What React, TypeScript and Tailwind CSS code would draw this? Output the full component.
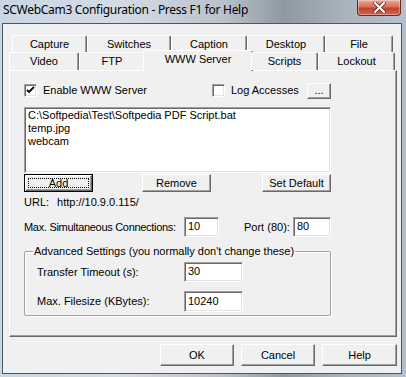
import React from "react";

const raised =
  "border border-t-white border-l-white border-r-[#696969] border-b-[#696969] shadow-[inset_-1px_-1px_0_#a0a0a0] bg-[#f0f0f0]";
const sunken =
  "border border-t-[#a0a0a0] border-l-[#a0a0a0] border-r-white border-b-white shadow-[inset_1px_1px_0_#696969,inset_-1px_-1px_0_#e3e3e3] bg-white";

function Btn({ label, w, h = 18, def = false, className = "" }: { label: string; w: number; h?: number; def?: boolean; className?: string }) {
  if (def) {
    return (
      <div className={`border border-black ${className}`} style={{ width: w, height: h }}>
        <div className={`${raised} w-full h-full flex items-center justify-center p-[2px]`}>
          <div className="w-full h-full border border-dotted border-black flex items-center justify-center leading-none">
            {label}
          </div>
        </div>
      </div>
    );
  }
  return (
    <div className={`${raised} flex items-center justify-center leading-none whitespace-nowrap ${className}`} style={{ width: w, height: h }}>
      {label}
    </div>
  );
}

function Check({ checked }: { checked: boolean }) {
  return (
    <div className={`${sunken} w-[13px] h-[13px] shrink-0 flex items-center justify-center`}>
      {checked && (
        <svg width="9" height="9" viewBox="0 0 9 9">
          <path d="M1 4 L3 6 L8 1" stroke="#000" strokeWidth="1.8" fill="none" />
        </svg>
      )}
    </div>
  );
}

function Tab({ label, w, h }: { label: string; w: number; h: number }) {
  return (
    <div
      className="border-t border-l border-t-white border-l-white border-r border-r-[#696969] shadow-[inset_-1px_0_0_#a0a0a0] rounded-tl-[2px] rounded-tr-[2px] bg-[#f0f0f0] flex items-start justify-center pt-[2px] leading-[13px] whitespace-nowrap"
      style={{ width: w, height: h }}
    >
      {label}
    </div>
  );
}

export default function App() {
  return (
    <div className="w-[406px] h-[377px] overflow-hidden flex flex-col bg-[linear-gradient(90deg,#c9d6e3_0%,#d3dce6_30%,#b9c2cb_55%,#8f99a3_70%,#a9b3bd_85%,#b4c0cc_100%)] font-['Liberation_Sans',Arial,sans-serif] text-[11px] text-black">
      {/* title bar */}
      <div className="h-[23px] flex items-start justify-between shrink-0">
        <div className="pl-[3px] pt-[2px] text-[12px] leading-[16px] text-black font-['Noto_Sans',sans-serif] tracking-[-0.3px]">
          SCWebCam3 Configuration - Press F1 for Help
        </div>
        <div className="mr-[5px] w-[44px] h-[16px] rounded-b-[4px] border border-t-0 border-[#6b2a20] bg-[linear-gradient(180deg,#e8a898_0%,#d9705c_45%,#c2412c_55%,#d0664f_100%)] shadow-[inset_0_0_0_1px_rgba(255,255,255,0.35)] flex items-center justify-center">
          <svg width="13" height="11" viewBox="0 0 13 11">
            <path d="M2 1 L11 10 M11 1 L2 10" stroke="#5a2a22" strokeWidth="3.6" strokeLinecap="square" />
            <path d="M2 1 L11 10 M11 1 L2 10" stroke="#fff" strokeWidth="2" strokeLinecap="square" />
          </svg>
        </div>
      </div>
      {/* client */}
      <div className="ml-[2px] mr-[4px] h-[351px] border border-[#4e5761] bg-[#f0f0f0] flex flex-col">
        <div className="pl-[6px] pt-[11px] flex flex-col">
          {/* tabs row 1 */}
          <div className="flex pl-[3px] h-[17px]">
            <Tab label="Capture" w={75} h={17} />
            <Tab label="Switches" w={84} h={17} />
            <Tab label="Caption" w={76} h={17} />
            <Tab label="Desktop" w={78} h={17} />
            <Tab label="File" w={68} h={17} />
          </div>
          {/* tabs row 2 */}
          <div className="flex h-[18px] items-end relative z-10">
            <Tab label="Video" w={70} h={18} />
            <Tab label="FTP" w={66} h={18} />
            <div
              className="border-t border-l border-t-white border-l-white border-r border-r-[#696969] shadow-[inset_-1px_0_0_#a0a0a0] rounded-t-[2px] bg-[#f0f0f0] flex items-start justify-center pt-[2px] leading-[13px] -mx-[2px] h-[21px] -mb-[1px]"
              style={{ width: 110 }}
            >
              WWW Server
            </div>
            <Tab label="Scripts" w={67} h={18} />
            <Tab label="Lockout" w={77} h={18} />
          </div>
          {/* page */}
          <div className="w-[388px] h-[267px] border border-t-white border-l-white border-r-[#696969] border-b-[#696969] shadow-[inset_-1px_-1px_0_#a0a0a0] flex flex-col pl-[14px]">
            {/* row A */}
            <div className="mt-[11px] h-[17px] w-[307px] flex items-center">
              <Check checked />
              <span className="ml-[6px] whitespace-nowrap">Enable WWW Server</span>
              <div className="ml-[65px] flex items-center">
                <Check checked={false} />
                <span className="ml-[6px] whitespace-nowrap">Log Accesses</span>
              </div>
              <Btn label="..." w={24} h={16} className="ml-auto" />
            </div>
            {/* listbox */}
            <div className={`${sunken} mt-[8px] w-[307px] h-[66px] pl-[3px] pt-[1px] leading-[13px]`}>
              <div>C:\Softpedia\Test\Softpedia PDF Script.bat</div>
              <div>temp.jpg</div>
              <div>webcam</div>
            </div>
            {/* buttons */}
            <div className="mt-[1px] w-[307px] flex">
              <Btn label="Add" w={69} def />
              <Btn label="Remove" w={69} className="ml-[49px]" />
              <Btn label="Set Default" w={69} className="ml-auto" />
            </div>
            <div className="mt-[3px] h-[14px] leading-[14px] flex">
              <span>URL:</span>
              <span className="ml-[8px]">http://10.9.0.115/</span>
            </div>
            <div className="mt-[8px] w-[307px] h-[20px] flex items-center">
              <span className="w-[160px] shrink-0 whitespace-nowrap tracking-[-0.3px]">Max. Simultaneous Connections:</span>
              <div className={`${sunken} w-[35px] shrink-0 h-[20px] pl-[3px] leading-[17px]`}>10</div>
              <span className="ml-[25px] whitespace-nowrap">Port (80):</span>
              <div className={`${sunken} w-[38px] shrink-0 h-[20px] pl-[3px] leading-[17px] ml-auto`}>80</div>
            </div>
            <fieldset className="mt-[8px] w-[307px] h-[71px] border border-[#a0a0a0] shadow-[inset_1px_1px_0_#fff,1px_1px_0_#fff] rounded-[2px] pl-[12px]">
              <legend className="ml-[-4px] px-[1px] leading-[13px] whitespace-nowrap">Advanced Settings (you normally don&apos;t change these)</legend>
              <div className="mt-[4px] flex items-center h-[20px]">
                <span className="w-[147px] shrink-0 whitespace-nowrap">Transfer Timeout (s):</span>
                <div className={`${sunken} w-[59px] h-[20px] pl-[3px] leading-[17px]`}>30</div>
              </div>
              <div className="mt-[9px] flex items-center h-[21px]">
                <span className="w-[147px] shrink-0 whitespace-nowrap">Max. Filesize (KBytes):</span>
                <div className={`${sunken} w-[59px] h-[21px] pl-[3px] leading-[18px]`}>10240</div>
              </div>
            </fieldset>
          </div>
          {/* bottom buttons */}
          <div className="mt-[7px] w-[388px] flex justify-end gap-[7px]">
            <Btn label="OK" w={74} h={22} />
            <Btn label="Cancel" w={74} h={22} />
            <Btn label="Help" w={75} h={22} />
          </div>
        </div>
      </div>
    </div>
  );
}
